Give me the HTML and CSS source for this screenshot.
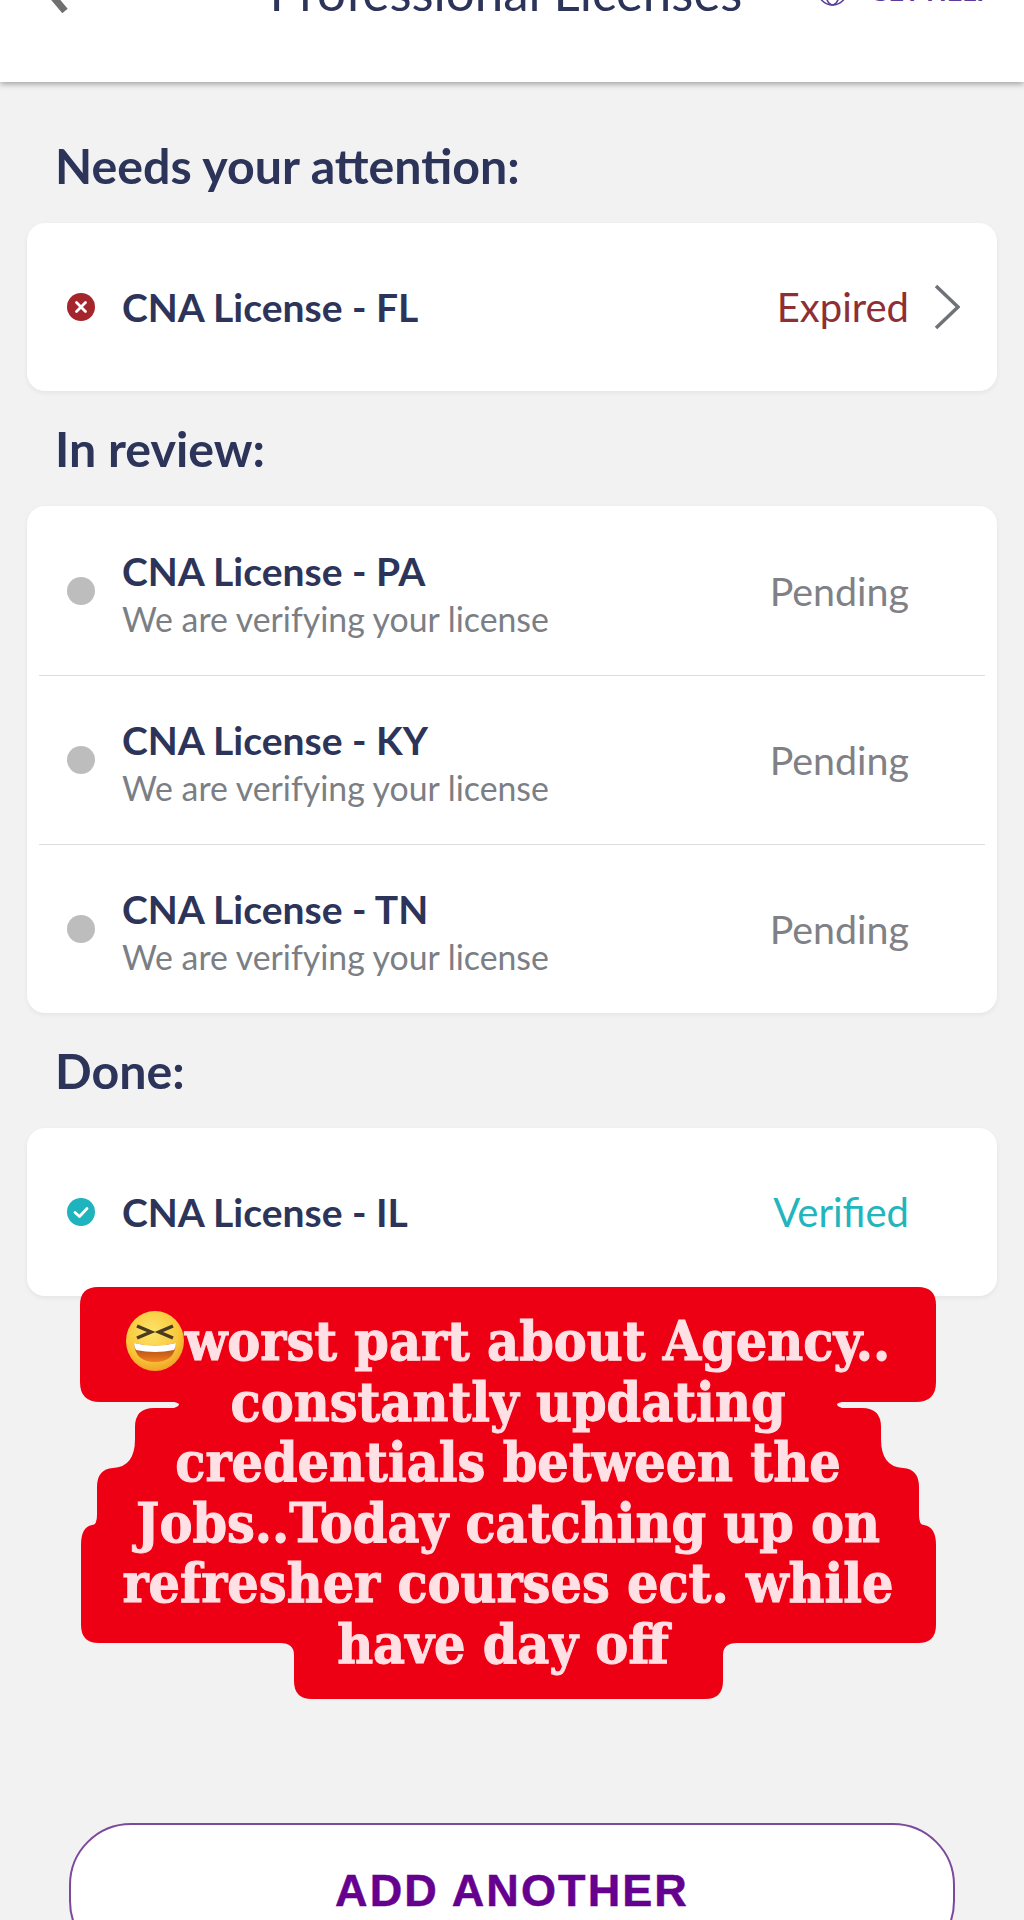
FILE: index.html
```html
<!DOCTYPE html>
<html lang="en">
<head>
<meta charset="utf-8">
<title>Professional Licenses</title>
<link rel="stylesheet" href="styles.css">
</head>
<body>
<div class="page">
  <header class="topbar">
    <div class="topbar-row">
      <svg class="back" width="40" height="60" viewBox="0 0 40 60"><path d="M29 -2 L8 23 L29 48" fill="none" stroke="#707070" stroke-width="7"/></svg>
      <h1 class="title">Professional Licenses</h1>
      <div class="help">
        <svg class="help-icon" width="33" height="33" viewBox="0 0 32 32" fill="none" stroke="#5a3d9a" stroke-width="1.5"><circle cx="16" cy="16" r="14"/><ellipse cx="16" cy="16" rx="7" ry="14"/><path d="M2 16H30M4 24H28"/></svg>
        <span>GET HELP</span>
      </div>
    </div>
  </header>
  <main class="content">
    <h2 class="section-title">Needs your attention:</h2>
    <section class="card">
      <div class="row row-single">
        <svg class="status-icon" viewBox="0 0 28 28"><circle cx="14" cy="14" r="14" fill="#a4262c"/><path d="M9.5 9.5L18.5 18.5M18.5 9.5L9.5 18.5" stroke="#fff" stroke-width="2.8" stroke-linecap="round"/></svg>
        <div class="row-text"><div class="name">CNA License - FL</div></div>
        <div class="status status-expired">Expired</div>
        <svg class="chevron" viewBox="0 0 26 46"><path d="M2 2L24 23L2 44" fill="none" stroke="#6f7277" stroke-width="3.5"/></svg>
      </div>
    </section>

    <h2 class="section-title">In review:</h2>
    <section class="card">
      <div class="row">
        <span class="dot"></span>
        <div class="row-text two-line"><div class="name">CNA License - PA</div><div class="sub">We are verifying your license</div></div>
        <div class="status status-pending">Pending</div>
      </div>
      <div class="row">
        <span class="dot"></span>
        <div class="row-text two-line"><div class="name">CNA License - KY</div><div class="sub">We are verifying your license</div></div>
        <div class="status status-pending">Pending</div>
      </div>
      <div class="row">
        <span class="dot"></span>
        <div class="row-text two-line"><div class="name">CNA License - TN</div><div class="sub">We are verifying your license</div></div>
        <div class="status status-pending">Pending</div>
      </div>
    </section>

    <h2 class="section-title">Done:</h2>
    <section class="card">
      <div class="row row-single">
        <svg class="status-icon" viewBox="0 0 28 28"><circle cx="14" cy="14" r="14" fill="#1fb3bd"/><path d="M8 14.5L12.5 18.5L20 10.5" fill="none" stroke="#fff" stroke-width="2.8" stroke-linecap="round" stroke-linejoin="round"/></svg>
        <div class="row-text"><div class="name">CNA License - IL</div></div>
        <div class="status status-verified">Verified</div>
      </div>
    </section>

    <button class="add-btn" type="button">ADD ANOTHER</button>
  </main>

  <div class="caption">
    <svg class="caption-bg" width="1024" height="412" viewBox="0 0 1024 412"><path fill="#ee0014" d="M98 0H918Q936 0 936 18V95Q936 115 916 115H842Q832 117 842 121H862Q881 121 881 140V152Q881 180 903 181Q919 182 919 200V228Q919 238 924 238Q936 240 936 258V338Q936 356 918 356H737Q723 356 723 368V394Q723 412 705 412H312Q294 412 294 394V368Q294 356 280 356H99Q81 356 81 338V258Q81 240 92 238Q97 238 97 228V200Q97 182 113 181Q135 180 135 152V140Q135 121 154 121H174Q184 117 174 115H100Q80 115 80 95V18Q80 0 98 0Z"/></svg>
    <div class="caption-lines">
      <div class="caption-line"><svg class="emoji" width="58" height="60" viewBox="0 0 58 60"><defs><radialGradient id="face" cx="45%" cy="35%" r="70%"><stop offset="0" stop-color="#fde46a"/><stop offset=".65" stop-color="#f9c73a"/><stop offset="1" stop-color="#ee9a22"/></radialGradient><linearGradient id="mouth" x1="0" y1="0" x2="0" y2="1"><stop offset="0" stop-color="#9c3a12"/><stop offset="1" stop-color="#f0801e"/></linearGradient></defs><ellipse cx="29" cy="30" rx="29" ry="30" fill="url(#face)"/><path d="M11 15L25 21L11 27M47 15L33 21L47 27" fill="none" stroke="#4a3a20" stroke-width="3.5"/><path d="M8 32Q29 37 50 32Q49 51 29 51Q9 51 8 32Z" fill="url(#mouth)"/><path d="M8 32Q29 37 50 32Q50 36 48 39Q29 43 10 39Q8 36 8 32Z" fill="#fff"/></svg>worst part about Agency..</div>
      <div class="caption-line">constantly updating</div>
      <div class="caption-line">credentials between the</div>
      <div class="caption-line">Jobs..Today catching up on</div>
      <div class="caption-line">refresher courses ect. while</div>
      <div class="caption-line caption-last">have day off</div>
    </div>
  </div>
</div>
</body>
</html>
```
FILE: styles.css
```css
* { box-sizing: border-box; }
html, body { margin: 0; padding: 0; height: 1920px; overflow: hidden; }
body { background: #f2f2f3; font-family: "Lato", "Liberation Sans", sans-serif; color: #2d3459; }
.page { position: relative; width: 1024px; height: 1920px; overflow: hidden; }

.topbar { display: flex; align-items: flex-start; height: 82px; background: #fff; box-shadow: 0 2px 6px rgba(0,0,0,.35); }
.topbar-row { flex: 1; display: flex; align-items: center; height: 60px; margin-top: -39px; padding: 0 31px 0 36px; }
.back { flex: none; align-self: flex-start; margin-top: 2px; }
.title { flex: 1; margin: 0; text-align: center; font-size: 51px; font-weight: 400; color: #2d3459; white-space: nowrap; padding-left: 120px; }
.help { display: flex; align-items: center; gap: 20px; color: #5a3d9a; font-size: 27px; font-weight: 700; white-space: nowrap; margin-top: -1px; }
.help-icon { flex: none; }

.content { padding: 0 27px; }
.section-title { margin: 33px 0 34px 28px; font-size: 48.3px; line-height: 48px; font-weight: 700; color: #2d3459; }
.section-title:first-child { margin-top: 59px; }

.card { background: #fff; border-radius: 18px; box-shadow: 0 2px 5px rgba(0,0,0,.06); }
.row { display: flex; align-items: center; height: 169px; padding: 0 88px 0 40px; position: relative; }
.row-single { height: 168px; }
.row + .row::before { content: ""; position: absolute; left: 12px; right: 12px; top: 0; height: 1px; background: #dcdde0; }
.status-icon { width: 28px; height: 28px; flex: none; }
.dot { width: 28px; height: 28px; border-radius: 50%; background: #bdbdbd; flex: none; }
.row-text { flex: 1; margin-left: 27px; }
.two-line { padding-top: 6px; }
.name { font-size: 39px; line-height: 46px; font-weight: 700; color: #2d3459; }
.sub { font-size: 33.8px; line-height: 40px; color: #7b7f85; margin-top: 5px; }
.status { font-size: 40px; }
.status-expired { color: #8e2f33; }
.status-pending { color: #7f8186; font-size: 39.4px; }
.status-verified { color: #22b5bd; }
.chevron { width: 26px; height: 46px; margin-left: 25px; margin-right: -51px; flex: none; }

.add-btn { display: block; width: 886px; height: 140px; margin: 527px 0 0 42px; background: #fff; border: 2.5px solid #7b4a9c; border-radius: 62px; color: #66008f; font-family: "Liberation Sans", sans-serif; font-size: 45px; font-weight: 700; padding: 0 0 4px; letter-spacing: 2.1px; -webkit-text-stroke: .5px #66008f; }

.caption { position: absolute; left: 0; top: 1287px; width: 1024px; height: 412px; }
.caption-bg { position: absolute; left: 0; top: 0; }
.caption-lines { position: relative; padding: 24px 0 0 0; width: 1016px; display: flex; flex-direction: column; align-items: center; }
.caption-line { font-family: "DejaVu Serif", serif; font-stretch: condensed; font-weight: 700; font-size: 55px; line-height: 60.5px; color: #ffe1e5; white-space: nowrap; display: flex; align-items: center; -webkit-text-stroke: 1px #ffe1e5; }
.caption-last { margin-right: 10px; }
.emoji { flex: none; margin-right: 1px; }
```
